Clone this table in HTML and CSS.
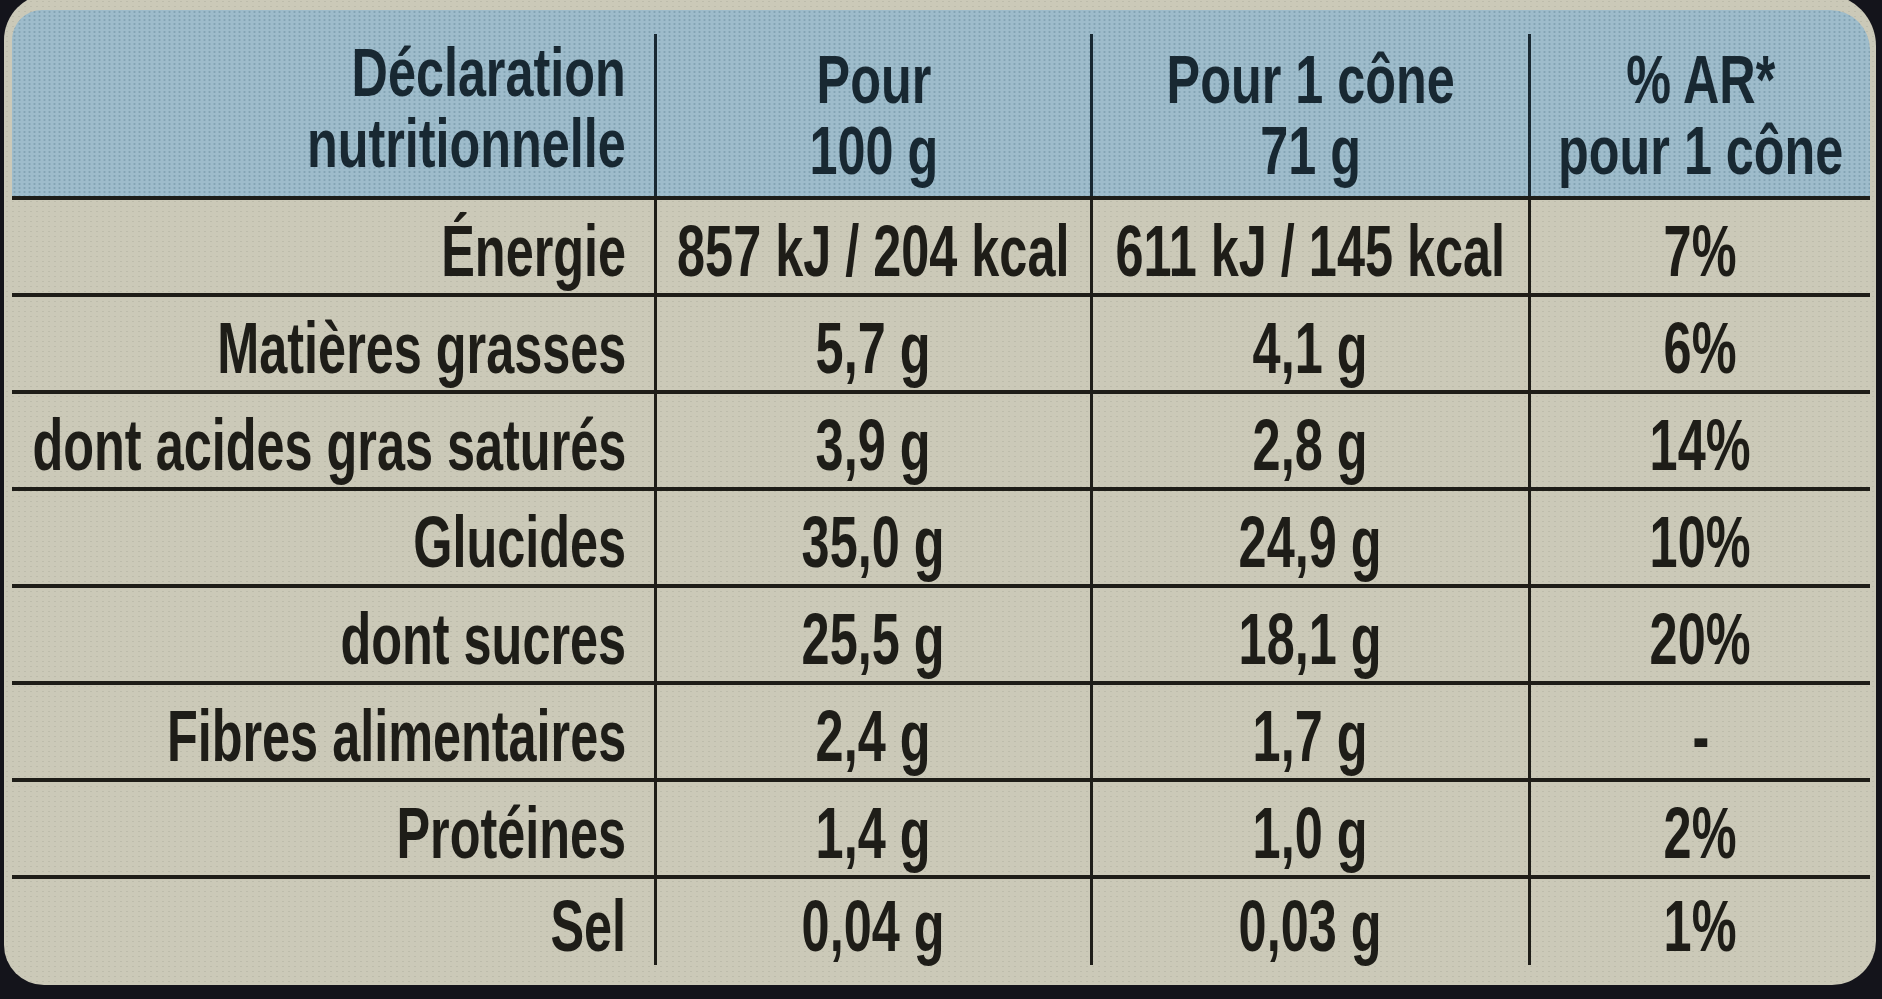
FILE: index.html
```html
<!DOCTYPE html>
<html lang="fr">
<head>
    <meta charset="UTF-8">
    <meta name="viewport" content="width=device-width, initial-scale=1.0">
    <title>Déclaration nutritionnelle</title>
    <link rel="stylesheet" href="styles.css">
</head>
<body>
    <div class="label">
        <div class="row head">
            <div class="cell name"><span class="t">Déclaration<br>nutritionnelle</span></div>
            <div class="cell"><span class="t">Pour<br>100 g</span></div>
            <div class="cell"><span class="t">Pour 1 cône<br>71 g</span></div>
            <div class="cell"><span class="t">% AR*<br>pour 1 cône</span></div>
        </div>
        <div class="row">
            <div class="cell name"><span class="t">Énergie</span></div>
            <div class="cell"><span class="t">857 kJ / 204 kcal</span></div>
            <div class="cell"><span class="t">611 kJ / 145 kcal</span></div>
            <div class="cell"><span class="t">7%</span></div>
        </div>
        <div class="row">
            <div class="cell name"><span class="t">Matières grasses</span></div>
            <div class="cell"><span class="t">5,7 g</span></div>
            <div class="cell"><span class="t">4,1 g</span></div>
            <div class="cell"><span class="t">6%</span></div>
        </div>
        <div class="row">
            <div class="cell name"><span class="t">dont acides gras saturés</span></div>
            <div class="cell"><span class="t">3,9 g</span></div>
            <div class="cell"><span class="t">2,8 g</span></div>
            <div class="cell"><span class="t">14%</span></div>
        </div>
        <div class="row">
            <div class="cell name"><span class="t">Glucides</span></div>
            <div class="cell"><span class="t">35,0 g</span></div>
            <div class="cell"><span class="t">24,9 g</span></div>
            <div class="cell"><span class="t">10%</span></div>
        </div>
        <div class="row">
            <div class="cell name"><span class="t">dont sucres</span></div>
            <div class="cell"><span class="t">25,5 g</span></div>
            <div class="cell"><span class="t">18,1 g</span></div>
            <div class="cell"><span class="t">20%</span></div>
        </div>
        <div class="row">
            <div class="cell name"><span class="t">Fibres alimentaires</span></div>
            <div class="cell"><span class="t">2,4 g</span></div>
            <div class="cell"><span class="t">1,7 g</span></div>
            <div class="cell"><span class="t">-</span></div>
        </div>
        <div class="row">
            <div class="cell name"><span class="t">Protéines</span></div>
            <div class="cell"><span class="t">1,4 g</span></div>
            <div class="cell"><span class="t">1,0 g</span></div>
            <div class="cell"><span class="t">2%</span></div>
        </div>
        <div class="row last">
            <div class="cell name"><span class="t">Sel</span></div>
            <div class="cell"><span class="t">0,04 g</span></div>
            <div class="cell"><span class="t">0,03 g</span></div>
            <div class="cell"><span class="t">1%</span></div>
        </div>
    </div>
</body>
</html>
```

FILE: styles.css
```css
body {
    margin: 0;
    height: 999px;
    overflow: hidden;
    background-color: #14141b;
    font-family: "Liberation Sans", Arial, sans-serif;
    font-weight: 700;
    color: #1e1d18;
}
.label {
    width: 1872px;
    margin: -6px 0 0 4px;
    padding: 16px 6px 20px 8px;
    box-sizing: border-box;
    background-color: #cbc9b8;
    background-image: radial-gradient(rgba(90, 90, 80, 0.12) 1px, transparent 1.3px);
    background-size: 6px 5px;
    border-radius: 46px 52px 44px 40px;
}
.row {
    display: grid;
    grid-template-columns: 642px 436px 438px 1fr;
    height: 97px;
    border-bottom: 4px solid #1e1d18;
    box-sizing: border-box;
    font-size: 72px;
    line-height: 72px;
}
.cell {
    display: flex;
    align-items: center;
    justify-content: center;
    text-align: center;
    border-left: 3px solid #1e1d18;
    padding-top: 8px;
    white-space: nowrap;
    min-width: 0;
}
.t {
    display: inline-block;
    flex: none;
    transform: scaleX(0.7);
}
.cell.name {
    justify-content: flex-end;
    text-align: right;
    border-left: none;
    padding-right: 28px;
}
.cell.name .t {
    transform-origin: right center;
}
.head {
    height: 190px;
    padding-top: 24px;
    background-color: #9ebccb;
    background-image: radial-gradient(rgba(40, 80, 100, 0.22) 1px, transparent 1.3px);
    background-size: 5px 4px;
    border-radius: 30px 40px 0 0;
    color: #182832;
    font-size: 68px;
    line-height: 71px;
}
.head .t {
    transform: scaleX(0.74);
}
.head .cell {
    border-left-color: #182832;
    padding-top: 0;
}
.head .cell.name {
    padding-bottom: 14px;
}
.last {
    height: 86px;
    border-bottom: none;
}
```
